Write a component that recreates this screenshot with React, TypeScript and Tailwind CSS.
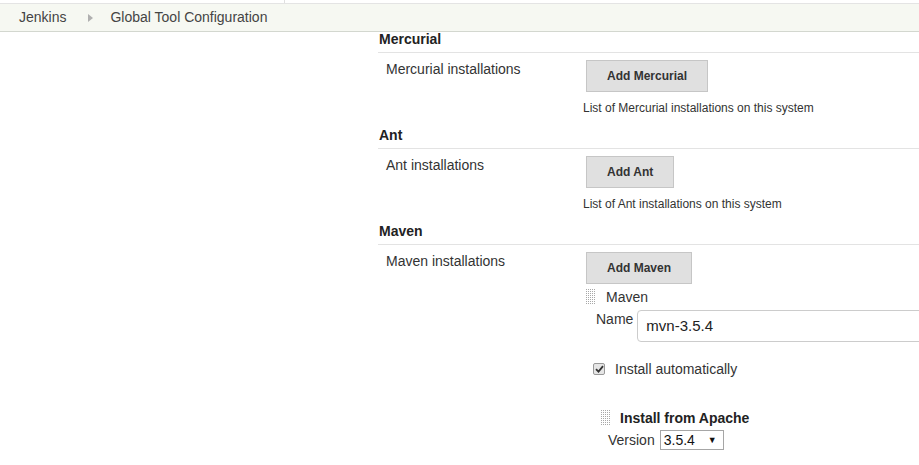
import type { ReactNode } from 'react';

function Handle() {
  const dots: ReactNode[] = [];
  for (let r = 0; r < 8; r++) {
    for (let c = 0; c < 5; c++) {
      dots.push(<rect key={`${r}-${c}`} x={c * 2} y={r * 2} width="1" height="1" fill="#a8a8a8" />);
    }
  }
  return (
    <svg width="10" height="16" viewBox="0 0 10 16" className="shrink-0">
      {dots}
    </svg>
  );
}

function AddButton({ label }: { label: string }) {
  return (
    <button className="h-[32px] border border-[#c6c6c6] bg-[#e0e0e0] px-[20px] text-[12px] font-bold text-[#333]">
      {label}
    </button>
  );
}

function Section({ title, label, button, desc }: { title: string; label: string; button: string; desc: string }) {
  return (
    <div>
      <div className="border-b border-[#e3e3e3] pb-[5px] pl-[1px] text-[14px] font-bold leading-[16px] text-[#222]">
        {title}
      </div>
      <div className="flex pt-[7px] pb-[12px]">
        <div className="w-[205px] shrink-0 pl-[8px] pt-[1px] text-[14px] leading-[16px] text-[#333]">{label}</div>
        <div className="flex flex-col items-start">
          <div className="pl-[3px]">
            <AddButton label={button} />
          </div>
          <div className="pt-[9px] text-[12px] leading-[14px] text-[#333]">{desc}</div>
        </div>
      </div>
    </div>
  );
}

export default function App() {
  return (
    <div className="h-[465px] w-[919px] overflow-hidden bg-white font-['Liberation_Sans',Arial,sans-serif] text-[#333]">
      <div className="h-[3px] w-[285px] border-r border-[#e0e0e0]" />
      <div className="flex h-[29px] items-center border-y border-[#e4e4e4] border-b-[#d3d7cf] bg-[#f6f8f2] pl-[19px] text-[14px] text-[#444]">
        <span>Jenkins</span>
        <svg width="5" height="8" viewBox="0 0 5 8" className="ml-[22px] mr-[17px]">
          <path d="M0 0 L5 4 L0 8 Z" fill="#b0b0b0" />
        </svg>
        <span>Global Tool Configuration</span>
      </div>
      <div className="-mt-[1px] flex">
        <div className="w-[378px] shrink-0" />
        <div className="flex-1">
          <Section
            title="Mercurial"
            label="Mercurial installations"
            button="Add Mercurial"
            desc="List of Mercurial installations on this system"
          />
          <Section title="Ant" label="Ant installations" button="Add Ant" desc="List of Ant installations on this system" />
          <div>
            <div className="border-b border-[#e3e3e3] pb-[5px] pl-[1px] text-[14px] font-bold leading-[16px] text-[#222]">
              Maven
            </div>
            <div className="flex pt-[7px]">
              <div className="w-[205px] shrink-0 pl-[8px] pt-[1px] text-[14px] leading-[16px] text-[#333]">
                Maven installations
              </div>
              <div className="flex flex-1 flex-col items-start">
                <div className="pl-[3px]">
                  <AddButton label="Add Maven" />
                </div>
                <div className="flex items-center gap-[10px] pl-[3px] pt-[5px] text-[14px] leading-[16px]">
                  <Handle />
                  <span className="text-[#333]">Maven</span>
                </div>
                <div className="flex w-[400px] items-start pl-[13px] pt-[5px]">
                  <span className="pt-[1px] text-[14px] leading-[16px]">Name</span>
                  <div className="ml-[4px] flex h-[32px] flex-1 items-center rounded-[4px] border border-[#ccc] pl-[8px] text-[15px] text-[#222]">
                    mvn-3.5.4
                  </div>
                </div>
                <div className="flex items-center pl-[10px] pt-[19px] text-[14px] leading-[16px]">
                  <span className="flex h-[12px] w-[12px] items-center justify-center rounded-[2px] border border-[#999] bg-[#e6e6e6]">
                    <svg width="9" height="8" viewBox="0 0 9 8">
                      <path d="M1 4.2 L3.5 6.6 L8 1.2" stroke="#333" strokeWidth="1.8" fill="none" />
                    </svg>
                  </span>
                  <span className="ml-[10px]">Install automatically</span>
                </div>
                <div className="flex items-center gap-[9px] pl-[18px] pt-[33px] text-[14px] leading-[16px]">
                  <Handle />
                  <span className="font-bold text-[#222]">Install from Apache</span>
                </div>
                <div className="flex items-center pl-[25px] pt-[4px] text-[14px] leading-[16px]">
                  <span>Version</span>
                  <div className="ml-[5px] flex h-[20px] w-[64px] items-center justify-between border border-[#a6a6a6] pl-[3px] pr-[6px] text-[14px] text-[#111]">
                    <span>3.5.4</span>
                    <span className="text-[9px]">▼</span>
                  </div>
                </div>
              </div>
            </div>
          </div>
        </div>
      </div>
    </div>
  );
}
